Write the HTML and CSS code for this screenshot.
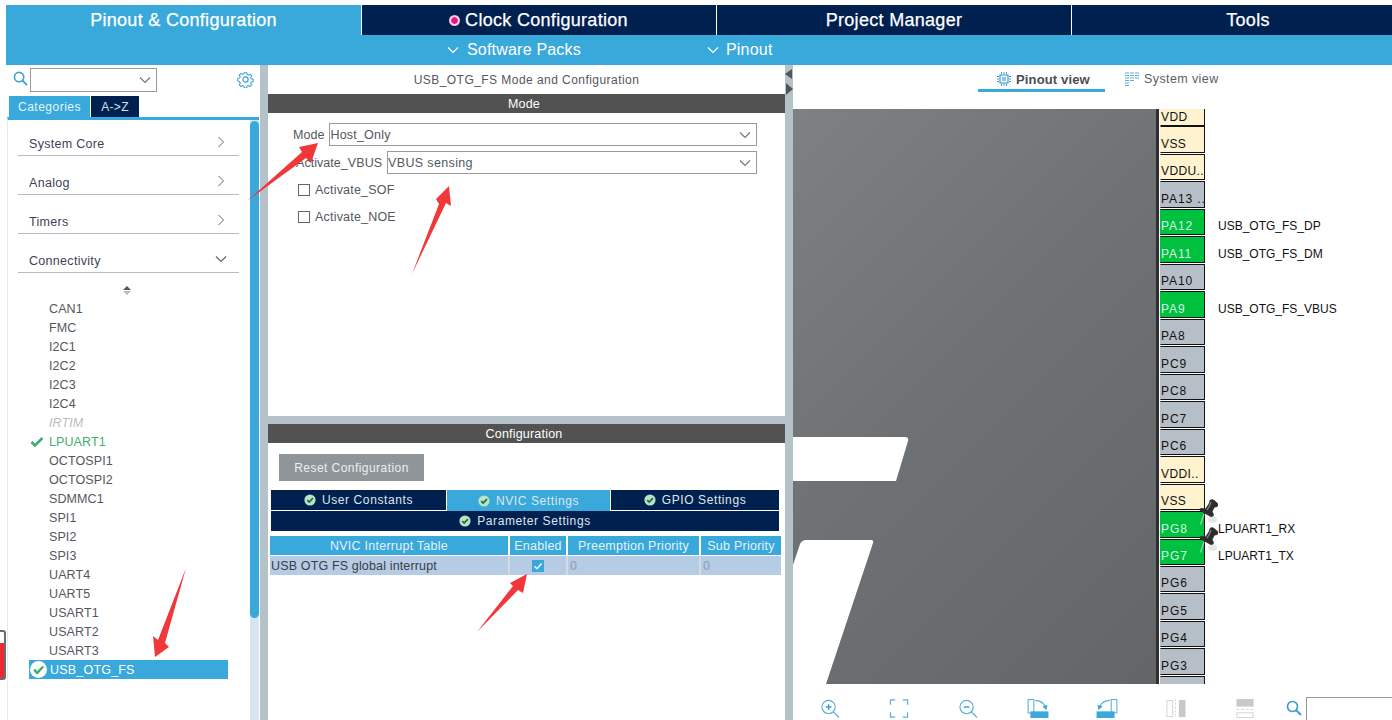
FILE: index.html
```html
<!DOCTYPE html>
<html lang="en">
<head>
<meta charset="utf-8">
<title>USB_OTG_FS Mode and Configuration</title>
<link rel="stylesheet" href="styles.css">
</head>
<body>
<svg class="defs" width="0" height="0" aria-hidden="true">
  <symbol id="chev-d" viewBox="0 0 12 8"><path d="M1 1.5 6 6.5 11 1.5" fill="none" stroke="currentColor" stroke-width="1.2"/></symbol>
  <symbol id="chev-r" viewBox="0 0 8 12"><path d="M1.5 1 6.5 6 1.5 11" fill="none" stroke="currentColor" stroke-width="1"/></symbol>
  <symbol id="ok" viewBox="0 0 12 12"><circle cx="6" cy="6" r="5.6" fill="#b9e2c6"/><path d="M3.2 6.2 5.2 8.1 8.9 4.2" fill="none" stroke="#1f6b4a" stroke-width="1.7"/></symbol>
  <symbol id="pin" viewBox="0 0 20 26">
    <ellipse cx="14.5" cy="20.5" rx="4.5" ry="3.5" fill="#dfe2df" opacity=".8"/>
    <path d="M6 15 2.5 25.5" stroke="#a9c4ae" stroke-width="1.3"/>
    <path d="M12 1Q14-.5 16 1L19.5 4Q21 6 19 8L16.5 8.5 14.5 12.5 16 16Q15 18 13 18L2 12Q1 10 3 9L7.5 9.5 10.5 5Z" fill="#2e2e2e"/>
    <path d="M13 3 11.5 7 9 11" stroke="#8d8d8d" stroke-width="1.1" fill="none"/>
  </symbol>
</svg>

<header class="topbar">
  <nav class="tabs">
    <div class="tab tab-active">Pinout &amp; Configuration</div>
    <div class="tab"><span class="dot"></span>Clock Configuration</div>
    <div class="tab">Project Manager</div>
    <div class="tab tab-tools">Tools</div>
  </nav>
  <div class="subbar">
    <div class="sub-item sub-packs"><svg class="sub-chev"><use href="#chev-d"/></svg>Software Packs</div>
    <div class="sub-item sub-pinout"><svg class="sub-chev"><use href="#chev-d"/></svg>Pinout</div>
  </div>
</header>

<main class="workspace">
  <aside class="left">
    <div class="search-row">
      <svg class="search-ico" viewBox="0 0 16 16"><circle cx="6.5" cy="6.5" r="5" fill="none" stroke="#3b9fd0" stroke-width="1.7"/><path d="M10 10 15 15" stroke="#3b9fd0" stroke-width="1.9"/></svg>
      <div class="combo"><svg class="chev"><use href="#chev-d"/></svg></div>
      <svg class="gear" viewBox="0 0 18 18"><path d="M7.5 1h3l.4 2.2 1.5.7 1.9-1.2 2 2.1-1.2 1.8.6 1.5 2.3.5v2.8l-2.3.5-.6 1.5 1.2 1.8-2 2.1-1.9-1.2-1.5.7-.4 2.2h-3l-.4-2.2-1.5-.7-1.9 1.2-2-2.1 1.2-1.8-.6-1.5L-.1 10.4V7.6l2.3-.5.6-1.5-1.2-1.8 2-2.1 1.9 1.2 1.5-.7z" transform="translate(.9 .9) scale(.9)" fill="none" stroke="#3b9fd0" stroke-width="1.2"/><circle cx="9" cy="9" r="2.8" fill="none" stroke="#3b9fd0" stroke-width="1.2"/></svg>
    </div>
    <div class="cat-tabs">
      <div class="cat-tab cat-on">Categories</div>
      <div class="cat-tab">A-&gt;Z</div>
    </div>
    <div class="list-wrap">
      <div class="list">
        <div class="cat">System Core<svg class="cat-chev"><use href="#chev-r"/></svg></div>
        <div class="cat">Analog<svg class="cat-chev"><use href="#chev-r"/></svg></div>
        <div class="cat">Timers<svg class="cat-chev"><use href="#chev-r"/></svg></div>
        <div class="cat">Connectivity<svg class="cat-chev-d"><use href="#chev-d"/></svg></div>
        <div class="sort"><span class="sort-up"></span><span class="sort-down"></span></div>
        <div class="item">CAN1</div>
        <div class="item">FMC</div>
        <div class="item">I2C1</div>
        <div class="item">I2C2</div>
        <div class="item">I2C3</div>
        <div class="item">I2C4</div>
        <div class="item item-off">IRTIM</div>
        <div class="item item-ok"><svg class="tick" viewBox="0 0 14 12"><path d="M1.5 6 5 9.5 12.5 2" fill="none" stroke="#3fae6f" stroke-width="2.6"/></svg>LPUART1</div>
        <div class="item">OCTOSPI1</div>
        <div class="item">OCTOSPI2</div>
        <div class="item">SDMMC1</div>
        <div class="item">SPI1</div>
        <div class="item">SPI2</div>
        <div class="item">SPI3</div>
        <div class="item">UART4</div>
        <div class="item">UART5</div>
        <div class="item">USART1</div>
        <div class="item">USART2</div>
        <div class="item">USART3</div>
        <div class="item item-sel"><svg class="sel-ok" viewBox="0 0 16 16"><circle cx="8" cy="8" r="8" fill="#fff"/><path d="M3.8 8.2 6.8 11.2 12.4 5.2" fill="none" stroke="#3fae6f" stroke-width="2.3"/></svg>USB_OTG_FS</div>
      </div>
      <div class="scroll"><div class="thumb"></div></div>
    </div>
  </aside>

  <div class="split-v"></div>

  <section class="center">
    <div class="mode-panel">
      <div class="panel-title">USB_OTG_FS Mode and Configuration</div>
      <div class="band">Mode</div>
      <div class="form-row row-mode"><label class="flabel">Mode</label><div class="select">Host_Only<svg class="chev"><use href="#chev-d"/></svg></div></div>
      <div class="form-row row-vbus"><label class="flabel">Activate_VBUS</label><div class="select">VBUS sensing<svg class="chev"><use href="#chev-d"/></svg></div></div>
      <div class="check-row row-sof"><span class="box"></span>Activate_SOF</div>
      <div class="check-row row-noe"><span class="box"></span>Activate_NOE</div>
    </div>
    <div class="split-h"></div>
    <div class="config-panel">
      <div class="band">Configuration</div>
      <button class="reset">Reset Configuration</button>
      <div class="subtabs">
        <div class="subtab st-user"><svg class="ok"><use href="#ok"/></svg>User Constants</div>
        <div class="subtab st-on st-nvic"><svg class="ok"><use href="#ok"/></svg>NVIC Settings</div>
        <div class="subtab st-gpio"><svg class="ok"><use href="#ok"/></svg>GPIO Settings</div>
        <div class="subtab st-param"><svg class="ok"><use href="#ok"/></svg>Parameter Settings</div>
      </div>
      <div class="nvic nvic-head">
        <div>NVIC Interrupt Table</div><div>Enabled</div><div>Preemption Priority</div><div>Sub Priority</div>
      </div>
      <div class="nvic nvic-row">
        <div class="irq">USB OTG FS global interrupt</div>
        <div class="en"><span class="en-box"><svg viewBox="0 0 12 12"><path d="M2.5 6.2 5 8.7 9.6 3.5" fill="none" stroke="#fff" stroke-width="1.3"/></svg></span></div>
        <div class="zero">0</div>
        <div class="zero">0</div>
      </div>
    </div>
  </section>

  <div class="split-v split-right">
    <span class="tri-l"></span><span class="tri-r"></span>
  </div>

  <section class="right">
    <div class="views">
      <div class="view view-on">
        <svg class="view-ico" viewBox="0 0 14 14"><rect x="3" y="3" width="8" height="8" fill="none" stroke="#3b9fd0" stroke-width="1.2"/><rect x="5" y="5" width="4" height="4" fill="#8cc8e6"/><path d="M0 4.5h2M0 7h2M0 9.5h2M12 4.5h2M12 7h2M12 9.5h2M4.5 0v2M7 0v2M9.5 0v2M4.5 12v2M7 12v2M9.5 12v2" stroke="#3b9fd0" stroke-width="1"/></svg>
        Pinout view
      </div>
      <div class="view">
        <svg class="view-ico" viewBox="0 0 14 14"><path d="M0 1h4M5 1h4M10 1h4M0 3.5h4M5 3.5h4M10 3.5h4M0 6h4M5 6h4M10 6h4M0 8.5h4M5 8.5h4M0 11h4M0 13.5h4" stroke="#5aaed8" stroke-width="1.2"/></svg>
        System view
      </div>
    </div>
    <div class="stage">
      <div class="chip">
        <svg class="chip-art" viewBox="0 0 363 575">
          <path d="M0 328H112Q116 328 115 332L103 372H0Z" fill="#fff"/>
          <path d="M0 456 7 435Q9 431 13 431H78Q81 431 80 434L33 575H0Z" fill="#fff"/>
        </svg>
      </div>
      <div class="pins">
        <div class="pinrow"><div class="pin p-pow">VDD</div></div>
        <div class="pinrow"><div class="pin p-pow">VSS</div></div>
        <div class="pinrow"><div class="pin p-pow">VDDU..</div></div>
        <div class="pinrow"><div class="pin p-io">PA13 ..</div></div>
        <div class="pinrow"><div class="pin p-on">PA12</div><span class="pinlabel">USB_OTG_FS_DP</span></div>
        <div class="pinrow"><div class="pin p-on">PA11</div><span class="pinlabel">USB_OTG_FS_DM</span></div>
        <div class="pinrow"><div class="pin p-io">PA10</div></div>
        <div class="pinrow"><div class="pin p-on">PA9</div><span class="pinlabel">USB_OTG_FS_VBUS</span></div>
        <div class="pinrow"><div class="pin p-io">PA8</div></div>
        <div class="pinrow"><div class="pin p-io">PC9</div></div>
        <div class="pinrow"><div class="pin p-io">PC8</div></div>
        <div class="pinrow"><div class="pin p-io">PC7</div></div>
        <div class="pinrow"><div class="pin p-io">PC6</div></div>
        <div class="pinrow"><div class="pin p-pow">VDDI..</div></div>
        <div class="pinrow"><div class="pin p-pow">VSS</div></div>
        <div class="pinrow"><div class="pin p-on">PG8</div><svg class="pushpin"><use href="#pin"/></svg><span class="pinlabel">LPUART1_RX</span></div>
        <div class="pinrow"><div class="pin p-on">PG7</div><svg class="pushpin"><use href="#pin"/></svg><span class="pinlabel">LPUART1_TX</span></div>
        <div class="pinrow"><div class="pin p-io">PG6</div></div>
        <div class="pinrow"><div class="pin p-io">PG5</div></div>
        <div class="pinrow"><div class="pin p-io">PG4</div></div>
        <div class="pinrow"><div class="pin p-io">PG3</div></div>
        <div class="pinrow"><div class="pin p-io"></div></div>
      </div>
    </div>
    <div class="toolbar">
      <svg class="tool t-zin" viewBox="0 0 20 20"><circle cx="8.5" cy="8.5" r="7" fill="none" stroke="#5aaed8" stroke-width="1.2"/><path d="M13.5 13.5 19.5 19.5" stroke="#5aaed8" stroke-width="1.3"/><path d="M5.5 8.5h6M8.5 5.5v6" stroke="#3b9fd0" stroke-width="1.5"/></svg>
      <svg class="tool t-fit" viewBox="0 0 20 20"><path d="M6 1H1V6M14 1h5V6M1 14v5H6M19 14v5h-5" fill="none" stroke="#5aaed8" stroke-width="1.3"/></svg>
      <svg class="tool t-zout" viewBox="0 0 20 20"><circle cx="8.5" cy="8.5" r="7" fill="none" stroke="#5aaed8" stroke-width="1.2"/><path d="M13.5 13.5 19.5 19.5" stroke="#5aaed8" stroke-width="1.3"/><path d="M5.5 8.5h6" stroke="#3b9fd0" stroke-width="1.5"/></svg>
      <svg class="tool t-rot" viewBox="0 0 22 20"><rect x=".6" y=".6" width="6" height="14" fill="none" stroke="#5aaed8" stroke-width="1.1"/><rect x="3" y="13" width="19" height="7" fill="#39a9dc"/><path d="M8 1.5Q16 1.5 19 9" fill="none" stroke="#5aaed8" stroke-width="1.2"/><path d="M15.5 8 20 11.5 21 6z" fill="#39a9dc"/></svg>
      <svg class="tool t-rot2" viewBox="0 0 22 20"><rect x="15.4" y=".6" width="6" height="14" fill="none" stroke="#5aaed8" stroke-width="1.1"/><rect x="0" y="13" width="19" height="7" fill="#39a9dc"/><path d="M14 1.5Q6 1.5 3 9" fill="none" stroke="#5aaed8" stroke-width="1.2"/><path d="M6.5 8 2 11.5 1 6z" fill="#39a9dc"/></svg>
      <svg class="tool t-col" viewBox="0 0 20 20"><rect x=".5" y="1.5" width="6" height="17" fill="none" stroke="#d4d4d4"/><path d="M9.5 0v20" stroke="#d4d4d4" stroke-dasharray="2 2"/><rect x="13" y="1" width="7" height="18" fill="#c9c9c9"/></svg>
      <svg class="tool t-row" viewBox="0 0 18 20"><rect x="0" y="0" width="18" height="8" fill="#c9c9c9"/><path d="M0 11h18" stroke="#d4d4d4" stroke-dasharray="3 2"/><rect x=".5" y="14.5" width="17" height="5" fill="none" stroke="#d4d4d4"/></svg>
      <svg class="tool t-find" viewBox="0 0 16 16"><circle cx="6.5" cy="6.5" r="5" fill="none" stroke="#3b9fd0" stroke-width="1.7"/><path d="M10 10 15 15" stroke="#3b9fd0" stroke-width="1.9"/></svg>
      <div class="find-box"></div>
    </div>
  </section>
</main>

<div class="edge-mark"><span class="edge-fill"></span></div>

<svg class="arrows" viewBox="0 0 1392 720" aria-hidden="true">
  <path d="M247 201 302 152 299 147 318 143 311 163 306 158Z"/>
  <path d="M412 274 439 204 436 199 449 186 451 206 446 203Z"/>
  <path d="M186 568 165 643 169 647 155 657 153 636 158 640Z"/>
  <path d="M477 632 513 586 510 583 527 574 523 593 518 590Z"/>
</svg>
</body>
</html>
```
FILE: styles.css
```css
* { box-sizing: border-box; }
html, body { margin: 0; height: 100%; }
body {
  position: relative;
  width: 1392px;
  height: 720px;
  overflow: hidden;
  padding-top: 5px;
  background: #fff;
  font-family: "Liberation Sans", Arial, sans-serif;
  font-size: 12px;
  color: #4b4d55;
}
.defs { position: absolute; }

/* top bar */
.topbar { margin-left: 6px; background: #39a9dc; height: 60px; }
.tabs { display: grid; grid-template-columns: 355px 354px 354px 1fr; gap: 1px; height: 30px; background: #fff; }
.tab {
  display: flex; align-items: center; justify-content: center;
  background: #002050; color: #fff;
  font-size: 18px; letter-spacing: .3px;
  -webkit-text-stroke: .25px #fff;
}
.tab-active { background: #39a9dc; }
.tab-tools { padding-left: 32px; }
.dot { width: 9px; height: 9px; border-radius: 50%; background: #e4168c; border: 1px solid #fff; margin-right: 6px; box-shadow: 0 0 0 1px #f4c0de; }
.subbar { display: flex; height: 30px; align-items: center; padding-left: 441px; color: #fff; font-size: 16px; letter-spacing: .2px; }
.sub-item { display: flex; align-items: center; gap: 8px; }
.sub-pinout { margin-left: 126px; gap: 7px; }
.sub-chev { width: 12px; height: 8px; color: #fff; }

/* workspace */
.workspace { display: flex; height: 655px; margin-left: 6px; }
.left { width: 254px; display: flex; flex-direction: column; }
.split-v { width: 8px; background: #b6c2c9; }
.center { width: 517px; display: flex; flex-direction: column; }
.right { flex: 1; display: flex; flex-direction: column; min-width: 0; }

/* left */
.search-row { height: 31px; display: flex; align-items: center; padding: 0 0 2px 7px; }
.search-ico { width: 15px; height: 15px; margin-bottom: 2px; }
.combo { width: 127px; height: 24px; margin-left: 2px; border: 1px solid #9a9a9a; position: relative; color: #666; }
.chev { position: absolute; right: 5px; top: 50%; margin-top: -4px; width: 12px; height: 8px; color: #777; }
.gear { width: 17px; height: 17px; margin-left: 80px; }
.cat-tabs { display: flex; height: 21px; padding-left: 3px; gap: 1px; }
.cat-tab { display: flex; align-items: center; justify-content: center; background: #002050; color: #cfe0ee; width: 48px; letter-spacing: .3px; }
.cat-on { background: #39a9dc; width: 81px; color: #e6f3fa; letter-spacing: .5px; }
.list-wrap { flex: 1; display: flex; border-top: 3px solid #39a9dc; border-left: 1px solid #e2e9ee; margin-left: 1px; margin-right: 1px; }
.list { width: 242px; display: flex; flex-direction: column; padding-left: 10px; }
.cat {
  position: relative; width: 221px; height: 28px; margin-top: 11px;
  display: flex; align-items: flex-end; padding: 0 0 4px 11px;
  border-bottom: 1px solid #b9bcc2;
  color: #3f4257; font-size: 12.5px; letter-spacing: .3px;
}
.cat:first-child { margin-top: 8px; }
.cat-chev { position: absolute; right: 14px; top: 8px; width: 8px; height: 12px; color: #666; }
.cat-chev-d { position: absolute; right: 12px; top: 10px; width: 12px; height: 8px; color: #666; }
.sort { height: 26px; padding: 8px 0 0 105px; display: flex; flex-direction: column; justify-content: center; gap: 1px; }
.sort-up { width: 0; border: 4px solid transparent; border-top: 0; border-bottom: 4px solid #555; }
.sort-down { width: 0; border: 4px solid transparent; border-bottom: 0; border-top: 4px solid #bbb; }
.item {
  position: relative; flex: none; height: 19px; width: 199px; margin-left: 11px;
  padding-left: 20px; display: flex; align-items: center;
  color: #55575e; font-size: 12.5px; letter-spacing: .1px;
}
.item-off { color: #b9bdc2; font-style: italic; }
.item-ok { color: #3fae6f; }
.tick { position: absolute; left: 1px; top: 4px; width: 14px; height: 12px; }
.item-sel { background: #39a9dc; color: #fff; padding-left: 21px; letter-spacing: .2px; }
.sel-ok { position: absolute; left: 1px; top: 1px; width: 17px; height: 17px; }
.scroll { width: 9px; background: #d5e6f2; margin-left: 0; }
.thumb { height: 497px; margin-top: 1px; background: #39a9dc; border-radius: 5px; }

/* center */
.mode-panel { height: 351px; }
.panel-title { height: 29px; display: flex; align-items: center; justify-content: center; color: #55575e; font-size: 12px; letter-spacing: .45px; }
.band { height: 19px; display: flex; align-items: center; justify-content: center; padding-right: 5px; background: #525252; color: #fff; font-size: 12.5px; letter-spacing: .2px; }
.form-row { display: flex; align-items: center; gap: 4px; width: 489px; font-size: 12.5px; }
.row-mode { margin-top: 10px; padding-left: 25px; }
.row-vbus { margin-top: 5px; padding-left: 28px; }
.select { position: relative; flex: 1; height: 23px; border: 1px solid #9a9a9a; padding-left: 0; display: flex; align-items: center; color: #55575e; letter-spacing: .35px; }
.flabel { color: #55575e; letter-spacing: .05px; }
.row-mode .select { margin-left: 1px; letter-spacing: .2px; }
.row-vbus .select { margin-left: 1px; }
.check-row { display: flex; align-items: center; gap: 5px; height: 14px; padding-left: 30px; color: #55575e; font-size: 12.5px; letter-spacing: .2px; }
.row-sof { margin-top: 9px; }
.row-noe { margin-top: 13px; }
.box { width: 12px; height: 12px; border: 1px solid #666; background: #fff; }
.split-h { height: 8px; background: #b6c2c9; }
.config-panel { flex: 1; display: flex; flex-direction: column; align-items: flex-start; }
.config-panel .band { align-self: stretch; }
.reset {
  margin: 11px 0 0 11px; width: 145px; height: 27px;
  border: 0; background: #8f9599; color: #eee;
  font: 12px "Liberation Sans", Arial, sans-serif; letter-spacing: .45px;
}
.subtabs { margin: 9px 0 0 3px; width: 508px; display: grid; grid-template-columns: 175px 165px 168px; gap: 1px 0; background: #fff; }
.subtab { height: 20px; display: flex; align-items: center; justify-content: center; gap: 6px; background: #002050; color: #dfe7ee; letter-spacing: .6px; }
.st-on { background: #39a9dc; height: 21px; margin-bottom: -1px; position: relative; border-left: 1px solid #fff; border-right: 1px solid #fff; }
.st-param { grid-column: 1 / -1; }
.ok { width: 12px; height: 12px; }
.nvic { display: grid; grid-template-columns: 238px 56px 131px 80px; gap: 2px; margin-left: 2px; width: 511px; }
.nvic-head { margin-top: 5px; height: 19px; }
.nvic-head div { background: #39a9dc; color: #e4f2fa; display: flex; align-items: center; justify-content: center; font-size: 12.5px; letter-spacing: .25px; }
.nvic-row { margin-top: 1px; height: 19px; background: #d0dde9; }
.nvic-row div { background: #b6cbe4; display: flex; align-items: center; font-size: 12.5px; }
.irq { padding-left: 1px; color: #3a3d48; letter-spacing: .15px; }
.en { justify-content: center; }
.en-box { width: 12px; height: 12px; background: #39a9dc; display: block; }
.en-box svg { display: block; }
.zero { padding-left: 2px; color: #8e9aa8; }

/* right splitter */
.split-right { display: flex; flex-direction: column; align-items: center; padding-top: 4px; gap: 4px; }
.tri-l { width: 0; border: 5px solid transparent; border-left: 0; border-right: 7px solid #555; margin-right: 1px; }
.tri-r { width: 0; border: 6px solid transparent; border-right: 0; border-left: 7px solid #555; margin-left: 1px; }

/* right */
.views { height: 44px; display: flex; padding: 4px 0 0 185px; }
.view { display: flex; align-items: center; gap: 5px; height: 20px; color: #5b5e66; font-size: 12.5px; letter-spacing: .4px; }
.view-on { width: 127px; padding-left: 19px; border-bottom: 3px solid #39a9dc; height: 23px; font-weight: bold; color: #4a4d57; font-size: 13px; letter-spacing: .15px; margin-right: 20px; }
.view-ico { width: 14px; height: 14px; flex: none; }
.stage { flex: none; height: 575px; display: flex; overflow: hidden; }
.chip { flex: none; width: 366px; height: 575px; border-right: 3px solid #2e2e2e; background: linear-gradient(135deg, #7e8183 0%, #6e7274 45%, #626667 100%); }
.chip-art { display: block; width: 363px; height: 575px; }
.pins { margin: -10px 0 0 1px; flex: none; }
.pinrow { position: relative; height: 27.47px; display: flex; }
.pin {
  width: 45px; height: 26.5px; border: 1px solid #111;
  border-left-color: transparent;
  display: flex; align-items: flex-end; padding: 0 0 1px 0;
  font-size: 12px; letter-spacing: .9px; color: #111; white-space: nowrap;
}
.p-pow { background: #fff3cf; letter-spacing: .4px; }
.p-io { background: #b6bfc7; }
.p-on { background: #00c040; color: #d8f6e2; }
.pinlabel { margin-left: 13px; align-self: flex-end; padding-bottom: 3px; color: #111; font-size: 12px; }
.pushpin { position: absolute; left: 38px; top: -12px; width: 20px; height: 26px; }

/* toolbar */
.toolbar { flex: 1; position: relative; display: flex; align-items: flex-end; height: 36px; padding: 0 0 2px 27px; }
.tool { flex: none; height: 19px; }
.t-zin { width: 20px; }
.t-fit { width: 20px; margin-left: 49px; }
.t-zout { width: 20px; margin-left: 49px; }
.t-rot { width: 22px; margin-left: 49px; }
.t-rot2 { width: 22px; margin-left: 47px; }
.t-col { width: 20px; margin-left: 48px; }
.t-row { width: 18px; margin-left: 50px; }
.t-find { width: 16px; margin-left: 32px; height: 16px; margin-bottom: 2px; }
.find-box { width: 90px; height: 23px; margin: 0 0 -2px 4px; border: 1px solid #999; border-bottom: 0; flex: none; }

/* overlays */
.edge-mark { position: absolute; left: -3px; top: 630px; width: 9px; height: 50px; border: 2px solid #6b6b6b; border-radius: 3px; background: #fff; padding-top: 11px; }
.edge-fill { display: block; height: 35px; background: #ee2b35; }
.arrows { position: absolute; left: 0; top: 0; width: 1392px; height: 720px; fill: #f0383a; pointer-events: none; }
```
